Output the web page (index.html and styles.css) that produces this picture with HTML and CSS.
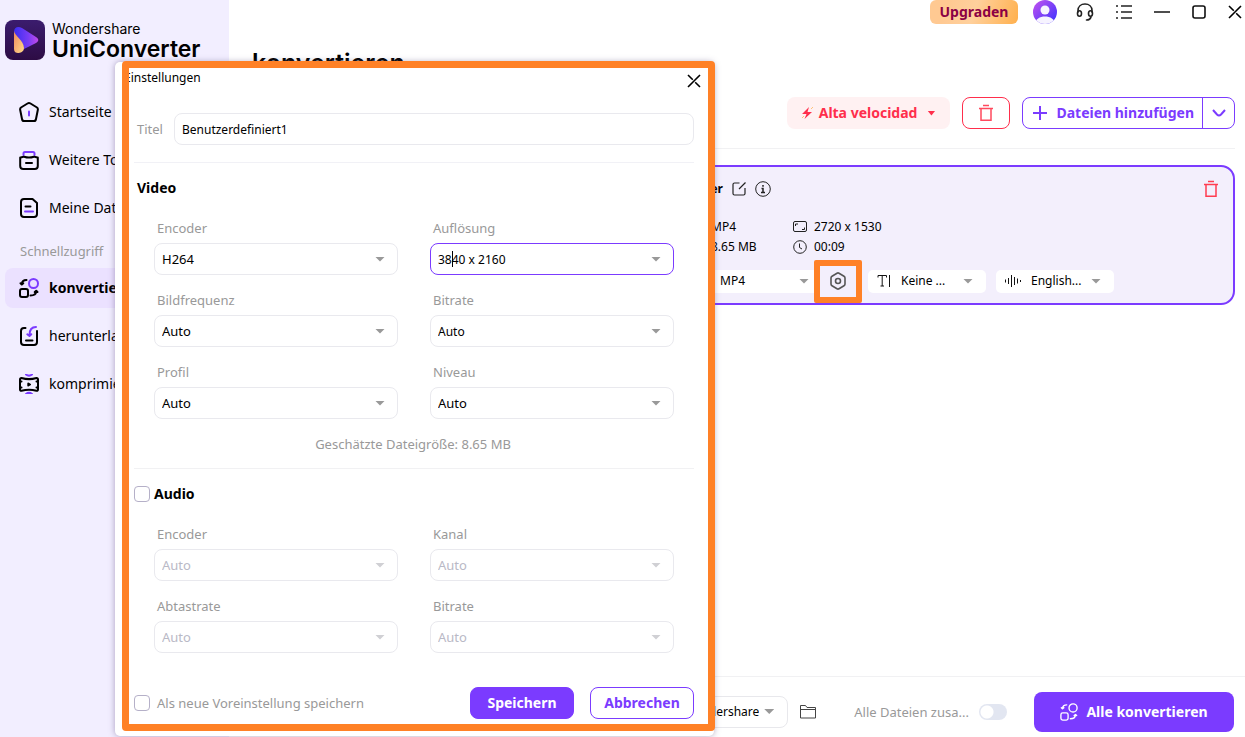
FILE: index.html
```html
<!DOCTYPE html>
<html lang="de">
<head>
<meta charset="utf-8">
<title>Wondershare UniConverter</title>
<link rel="stylesheet" href="styles.css">
</head>
<body>
<svg class="defs" aria-hidden="true">
  <symbol id="convert" viewBox="0 0 20 20" fill="none" stroke-linecap="round" stroke-linejoin="round">
    <circle class="accent" cx="14.500" cy="5.500" r="4.500"/>
    <rect x="1" y="11" width="8" height="8" rx="2"/>
    <path d="M7.500 2C4.500 2 3 3.500 2.800 6M1.500 5.200l1.300 1.300L4.300 5.200M11.500 17.500c3.500 0 5.500-1.500 5.700-4M15.700 14l1.500-1.300 1.300 1.300"/>
  </symbol>
  <symbol id="trash" viewBox="0 0 16 18" fill="none" stroke="currentColor" stroke-width="1.500">
    <path d="M5 1.500h6M1 4.500h14M3 5v11.200h10V5"/>
  </symbol>
  <symbol id="close" viewBox="0 0 14 14" fill="none" stroke="currentColor" stroke-width="1.600">
    <path d="M1 1l4.800 4.800M8.200 8.200L13 13M13 1L1 13"/>
  </symbol>
</svg>

<div class="app">
  <aside class="sidebar">
    <div class="brand">
      <svg width="40" height="40" viewBox="0 0 40 40" aria-hidden="true">
        <defs>
          <linearGradient id="lg1" x1="0" y1="0" x2="0" y2="1"><stop offset="0" stop-color="#3b1c6e"/><stop offset="1" stop-color="#2d0c44"/></linearGradient>
          <linearGradient id="lg2" x1="0" y1="0" x2="1" y2="0"><stop offset="0" stop-color="#3b2df0"/><stop offset="0.600" stop-color="#7a3cf5"/><stop offset="1" stop-color="#c04ae8"/></linearGradient>
          <linearGradient id="lg3" x1="0" y1="0" x2="1" y2="1"><stop offset="0" stop-color="#f08a5d"/><stop offset="1" stop-color="#ffd98a"/></linearGradient>
        </defs>
        <rect width="40" height="40" rx="8" fill="url(#lg1)"/>
        <path d="M9 12C9 7 13 6 17 8l14 9c3 2 3 4 0 6l-12 6C19 22 10 16 9 12z" fill="url(#lg2)"/>
        <path d="M9 11c1 5 10 10 10 17 0 4-4 5-6 5s-4-1-4-4z" fill="url(#lg3)"/>
      </svg>
      <div class="brand-text"><span class="brand-top">Wondershare</span><span class="brand-name">UniConverter</span></div>
    </div>
    <nav class="nav">
      <a class="nav-item" href="#"><svg viewBox="0 0 20 20"><path d="M8.500 1.500L2 5.500C1 6.200 1 7 1.200 8L3 17c.2 1.300 1 2 2 2h10c1 0 1.800-.7 2-2l1.800-9c.2-1 .2-1.800-.8-2.500l-6.500-4c-1-.6-2-.6-3 0z"/><path class="accent" d="M10 9.500v4"/></svg>Startseite</a>
      <a class="nav-item" href="#"><svg viewBox="0 0 20 20"><path class="accent" d="M4.500 5V3.500C4.500 2.500 5 2 6 2h8c1 0 1.500.5 1.500 1.500V5"/><path d="M1.200 7.500c1 0 2.500-1 4-.7 3 1 6.600 1 9.600 0 1.500-.3 3 .7 4 .7V16c0 2-1 3-3 3H4.200c-2 0-3-1-3-3zM7 13h6"/></svg>Weitere Tools</a>
      <a class="nav-item" href="#"><svg viewBox="0 0 20 20"><path d="M5 1h8.500L18 5v11c0 2-1 3-3 3H5c-2 0-3-1-3-3V4c0-2 1-3 3-3zM6.500 8.500h5"/><path class="accent" d="M6 13.500h8"/></svg>Meine Dateien</a>
      <p class="nav-label">Schnellzugriff</p>
      <a class="nav-item active" href="#"><svg class="duo"><use href="#convert"/></svg>konvertieren</a>
      <a class="nav-item" href="#"><svg viewBox="0 0 20 20"><path d="M6.500 2H5C3 2 2 3 2 5v11c0 2 1 3 3 3h10c2 0 3-1 3-3V5M7 14.500h6.500"/><path class="accent" d="M17 1c-4 0-6.500 2.500-6.500 8M8.300 8.300l2.200 1.700 1.800-1.700"/></svg>herunterladen</a>
      <a class="nav-item" href="#"><svg viewBox="0 0 20 20"><path d="M2.500 4C1.500 4 1 4.500 1 5.500v10C1 16.500 1.500 17 2.500 16.800c5-1.500 10-1.500 15 0 1 .2 1.500-.3 1.500-1.300v-10C19 4.500 18.500 4 17.500 4c-5 1.500-10 1.500-15 0z"/><path d="M1 7.500h1.500M1 13.500h1.500M17.500 7.500H19M17.500 13.500H19M9.300 9.500l1.700 1-1.700 1z"/><path class="accent" d="M7 .5c2 1.500 4 1.500 6 0M7 20c2-1.500 4-1.500 6 0"/></svg>komprimieren</a>
    </nav>
  </aside>

  <main class="main">
    <header class="topbar">
      <button class="upgrade">Upgraden</button>
      <button class="icon-btn" aria-label="Konto"><svg width="24" height="24" viewBox="0 0 24 24"><defs><linearGradient id="av" x1="0" y1="0" x2="1" y2="1"><stop offset="0" stop-color="#c653ee"/><stop offset="1" stop-color="#3730ff"/></linearGradient><clipPath id="ac"><circle cx="12" cy="12" r="12"/></clipPath></defs><circle cx="12" cy="12" r="12" fill="url(#av)"/><g clip-path="url(#ac)" fill="#f6f3ff"><circle cx="12" cy="10" r="4.500"/><path d="M2 24c0-10 20-10 20 0z"/></g></svg></button>
      <button class="icon-btn" aria-label="Support"><svg width="18" height="20" viewBox="0 0 18 20" fill="none" stroke="#222" stroke-width="1.600" stroke-linecap="round"><path d="M2 10V8.500C2 4.500 5 2 9 2s7 2.500 7 6.500V10M15 15c-.5 2-2.500 3-4.500 3"/><ellipse cx="3.500" cy="11.500" rx="2" ry="2.800"/><ellipse cx="14.500" cy="11.500" rx="2" ry="2.800"/></svg></button>
      <button class="icon-btn" aria-label="Menü"><svg width="16" height="16" viewBox="0 0 16 16" stroke="#222" stroke-width="1.600"><path d="M0 2h2M5 2h11M0 8h2M5 8h11M0 14h2M5 14h11"/></svg></button>
      <button class="icon-btn" aria-label="Minimieren"><svg width="16" height="16" viewBox="0 0 16 16" stroke="#222" stroke-width="1.600"><path d="M0 8h16"/></svg></button>
      <button class="icon-btn" aria-label="Maximieren"><svg width="14" height="14" viewBox="0 0 14 14" fill="none" stroke="#111" stroke-width="1.600"><rect x="1" y="1" width="12" height="12" rx="2"/></svg></button>
      <button class="icon-btn" aria-label="Schließen"><svg width="14" height="14"><use href="#close"/></svg></button>
    </header>
    <h1>konvertieren</h1>
    <div class="toolbar">
      <button class="speed"><svg width="12" height="14" viewBox="0 0 12 14"><path d="M8 1L1 8h4.500L3.500 13 11 6H6.500z" fill="#ff2e4c"/><path d="M1 12l2-2M10 3l2-2" stroke="#ffc27a"/></svg>Alta velocidad<span class="caret"></span></button>
      <button class="clear" aria-label="Alle löschen"><svg width="16" height="18"><use href="#trash"/></svg></button>
      <div class="add">
        <button class="add-main"><svg width="14" height="14" viewBox="0 0 14 14" stroke="currentColor" stroke-width="2"><path d="M7 0v14M0 7h14"/></svg>Dateien hinzufügen</button>
        <button class="add-more" aria-label="Weitere Optionen"><svg width="14" height="8" viewBox="0 0 14 8" fill="none" stroke="currentColor" stroke-width="2"><path d="M1 1l4 4.500c1.500 1.500 2.500 1.500 4 0L13 1"/></svg></button>
      </div>
    </div>
    <article class="card">
      <div class="info">
        <div class="card-title">
          <h2>UniConverter</h2>
          <svg width="14" height="14" viewBox="0 0 14 14" fill="none" stroke="#222" stroke-width="1.200"><path d="M7.500 1H2.500C1.500 1 1 1.500 1 2.500v9c0 1 .5 1.500 1.500 1.500h9c1 0 1.500-.5 1.500-1.500V6M7 7l6.500-6.500"/></svg>
          <svg width="16" height="16" viewBox="0 0 16 16" fill="none" stroke="#222"><circle cx="8" cy="8" r="7.300"/><path d="M8 4v1.800M6.500 7.500H8V11M6 11.500h4" stroke-width="1.500"/></svg>
          <button class="icon-btn remove" aria-label="Datei entfernen"><svg width="16" height="18"><use href="#trash"/></svg></button>
        </div>
        <div class="meta">
          <span>MP4</span>
          <span class="with-icon"><svg width="14" height="12" viewBox="0 0 14 12" fill="none" stroke="#222"><rect x=".5" y=".5" width="13" height="10" rx="1.500"/><path d="M2.500 5V3h2.500M9 8.500h2.500V6.500"/></svg>2720 x 1530</span>
          <span>8.65 MB</span>
          <span class="with-icon"><svg width="14" height="14" viewBox="0 0 14 14" fill="none" stroke="#222"><circle cx="7" cy="7" r="6.300"/><path d="M6.500 3.500v4L9 9"/></svg>00:09</span>
        </div>
        <div class="controls">
          <span class="pick format"><select aria-label="Format"><option>MP4</option></select></span>
          <span class="gear"><button class="icon-btn" aria-label="Einstellungen"><svg width="18" height="18" viewBox="0 0 18 18" fill="none" stroke="#555" stroke-width="1.600"><path d="M8 1.200c.7-.4 1.300-.4 2 0l5 3c.7.4 1 1 1 1.700v6.200c0 .7-.3 1.300-1 1.700l-5 3c-.7.400-1.300.4-2 0l-5-3c-.7-.4-1-1-1-1.700V5.900c0-.7.3-1.300 1-1.700z"/><circle cx="9" cy="9" r="2.500"/></svg></button></span>
          <span class="pick track"><svg width="14" height="14" viewBox="0 0 14 14" fill="none" stroke="#111"><path d="M1 3.500V1.500h8.500v2M5.200 1.500V12M3.500 12h3.500M12.500 1v12"/></svg><select aria-label="Untertitel"><option>Keine ...</option></select></span>
          <span class="pick track"><svg width="16" height="12" viewBox="0 0 16 12" stroke="#111"><path d="M.5 4.500v3M3.500 3v6M6.500 0v12M9.500 2v8M12.500 3.500v5M15.500 5v2"/></svg><select aria-label="Tonspur"><option>English...</option></select></span>
        </div>
      </div>
    </article>
    <footer class="bottom">
      <span class="pick path"><select aria-label="Speicherort"><option>Wondershare</option></select></span>
      <button class="icon-btn" aria-label="Ordner öffnen"><svg width="16" height="15" viewBox="0 0 16 15" fill="none" stroke="#444"><path d="M.5 14V1.500h5l1.500 2h8.500V14zM.5 5.500h15"/></svg></button>
      <label class="merge"><span>Alle Dateien zusa...</span><input type="checkbox" class="toggle"></label>
      <button class="convert-all"><svg width="18" height="18"><use href="#convert"/></svg>Alle konvertieren</button>
    </footer>
  </main>

  <section class="dialog" role="dialog" aria-labelledby="dlg-title">
    <header class="dialog-head"><h2 id="dlg-title">Einstellungen</h2><button class="icon-btn" aria-label="Dialog schließen"><svg width="14" height="14"><use href="#close"/></svg></button></header>
    <form class="form">
      <div class="title-row"><label for="preset">Titel</label><input id="preset" class="box small" type="text" value="Benutzerdefiniert1"></div>
      <fieldset class="group">
        <h3>Video</h3>
        <div class="fields">
          <div class="field"><label for="v1">Encoder</label><span class="pick"><select class="box" id="v1"><option>H264</option></select></span></div>
          <div class="field"><label for="v2">Auflösung</label><span class="pick"><input class="box small focused" id="v2" type="text" value="3840 x 2160"><span class="cursor"></span></span></div>
          <div class="field"><label for="v3">Bildfrequenz</label><span class="pick"><select class="box" id="v3"><option>Auto</option></select></span></div>
          <div class="field"><label for="v4">Bitrate</label><span class="pick"><input class="box small" id="v4" type="text" value="Auto"></span></div>
          <div class="field"><label for="v5">Profil</label><span class="pick"><select class="box" id="v5"><option>Auto</option></select></span></div>
          <div class="field"><label for="v6">Niveau</label><span class="pick"><select class="box" id="v6"><option>Auto</option></select></span></div>
        </div>
        <p class="estimate">Geschätzte Dateigröße: 8.65 MB</p>
      </fieldset>
      <fieldset class="group">
        <h3 class="audio-head"><label><input type="checkbox" class="check">Audio</label></h3>
        <div class="fields">
          <div class="field"><label for="a1">Encoder</label><span class="pick off"><select class="box" id="a1" disabled><option>Auto</option></select></span></div>
          <div class="field"><label for="a2">Kanal</label><span class="pick off"><select class="box" id="a2" disabled><option>Auto</option></select></span></div>
          <div class="field"><label for="a3">Abtastrate</label><span class="pick off"><select class="box" id="a3" disabled><option>Auto</option></select></span></div>
          <div class="field"><label for="a4">Bitrate</label><span class="pick off"><select class="box" id="a4" disabled><option>Auto</option></select></span></div>
        </div>
      </fieldset>
      <div class="actions">
        <label class="save-new"><input type="checkbox" class="check">Als neue Voreinstellung speichern</label>
        <button type="button" class="btn primary">Speichern</button>
        <button type="button" class="btn outline">Abbrechen</button>
      </div>
    </form>
    <div class="frame"></div>
  </section>
</div>
</body>
</html>
```

FILE: styles.css
```css
* { box-sizing: border-box; }
body {
  margin: 0;
  font: 14px/20px "Noto Sans", "Open Sans", sans-serif;
  color: #000;
  background: #fff;
}
h1, h2, h3, p, fieldset { margin: 0; padding: 0; border: 0; min-width: 0; }
button, input, select { font: inherit; color: inherit; margin: 0; }
button { border: 0; background: none; padding: 0; cursor: pointer; }
svg { display: block; flex: none; }
.defs { position: absolute; width: 0; height: 0; }

.app { position: relative; display: grid; grid-template-columns: 229px 1fr; min-height: 100vh; overflow: hidden; }

/* Sidebar */
.sidebar { background: #f2eeff; padding: 20px 5px; }
.brand { display: flex; gap: 7px; height: 40px; }
.brand-text { display: flex; flex-direction: column; font-family: Inter, sans-serif; white-space: nowrap; }
.brand-top { font-size: 14px; line-height: 18px; }
.brand-name { font-size: 23px; line-height: 22px; font-weight: 600; }
.nav { display: flex; flex-direction: column; gap: 8px; padding-top: 32px; }
.nav-item { display: flex; align-items: center; gap: 10px; height: 40px; padding: 0 14px; border-radius: 8px; color: #000; text-decoration: none; }
.nav-item svg { width: 20px; height: 20px; fill: none; stroke: #000; stroke-width: 2; stroke-linecap: round; stroke-linejoin: round; --accent: #7b3bff; }
.accent { stroke: var(--accent); }
.nav-item.active { background: #ebe1ff; font-weight: 700; }
.nav-label { padding: 7px 15px 1px; line-height: 16px; font-size: 13px; height: 24px; color: #999; }

/* Main area */
.main { display: flex; flex-direction: column; min-width: 0; }
.icon-btn { display: inline-flex; }
.topbar { display: flex; align-items: center; justify-content: flex-end; height: 24px; gap: 22px; padding-right: 3px; }
.topbar .upgrade { height: 24px; width: 88px; border-radius: 6px; background: linear-gradient(110deg, #ffc992 20%, #ffd09c 50%, #ffb04d); color: #8b0044; font-weight: 700; margin-right: -7px; }
.topbar .icon-btn:nth-child(2) { margin-right: -3px; }
h1 { font: 600 25px/32px Inter, sans-serif; padding: 23px 23px 18px; height: 73px; }
.toolbar { display: flex; justify-content: flex-end; gap: 12px; margin: 0 10px 16px 23px; padding-bottom: 19px; border-bottom: 1px solid #f1f1f3; font-weight: 700; }
.toolbar button { height: 32px; display: flex; align-items: center; }
.toolbar .speed { background: #fff1f2; border-radius: 8px; color: #ff2e4c; gap: 6px; padding: 0 15px 0 14px; }
.caret { width: 8px; height: 5px; margin-left: 4px; background: currentColor; clip-path: polygon(0 0, 100% 0, 50% 100%); }
.toolbar .clear { width: 48px; justify-content: center; border: 1px solid #ff2e4c; border-radius: 8px; color: #ff4a5e; }
.add { display: flex; height: 32px; border: 1px solid #7b3bff; border-radius: 8px; color: #7b3bff; }
.toolbar .add button { height: 30px; }
.add .add-main { gap: 9px; padding: 0 8px 0 10px; border-right: 1px solid #7b3bff; }
.add .add-more { width: 31px; justify-content: center; }

.card { margin: 0 10px 0 23px; border: 2px solid #7b3bff; border-radius: 14px; background: #f3effc; font-size: 12px; padding: 12px 14px 10px 382px; }
.card-title { display: flex; align-items: center; gap: 9px; height: 20px; }
.card-title h2 { width: 87px; text-align: right; font-size: 12px; line-height: 20px; }
.remove { margin-left: auto; color: #ff3d50; }
.meta { display: grid; grid-template-columns: 82px 1fr; padding: 18px 0 0 75px; line-height: 20px; }
.with-icon { display: flex; align-items: center; gap: 7px; }
.controls { display: flex; align-items: center; height: 24px; margin-top: 12px; }

.pick { position: relative; display: flex; align-items: center; color: #000; }
.pick::after { content: ""; position: absolute; right: 13px; width: 10px; height: 5px; background: #999; clip-path: polygon(0 0, 100% 0, 50% 100%); pointer-events: none; }
.pick select { appearance: none; border: 0; background: transparent; outline: 0; min-width: 0; flex: 1; }
.controls .pick { height: 23px; background: #fff; border-radius: 5px; }
.controls .format { width: 184px; padding-left: 84px; }
.controls .format::after { right: 11px; }
.controls .track { width: 118px; padding-left: 9px; gap: 10px; }
.controls .track select { height: 23px; }
.controls .track + .track { margin-left: 10px; }
.gear { display: flex; align-items: center; justify-content: center; width: 48px; height: 43px; margin: 0 6px 0 -6px; border: 6px solid #ff8126; border-radius: 2px; position: relative; }

.bottom { display: flex; align-items: center; justify-content: flex-end; height: 61px; margin-top: auto; padding: 9px 11px 0 23px; border-top: 1px solid #f1f1f3; }
.path { width: 180px; height: 32px; border: 1px solid #e8e8ec; border-radius: 8px; margin-right: 12px; font-size: 12px; padding: 0 28px 0 74px; }
.merge { display: flex; align-items: center; gap: 10px; color: #999; margin: 0 27px 0 38px; font-size: 13px; }
.toggle { appearance: none; width: 28px; height: 16px; border-radius: 8px; background: radial-gradient(circle at 8px 8px, #fff 6px, #e2e6f1 7px); }
.convert-all { display: flex; align-items: center; justify-content: center; gap: 8px; width: 200px; height: 40px; border-radius: 8px; background: #7b3bff; color: #fff; font-weight: 700; }
.convert-all svg { stroke: #fff; stroke-width: 1.5; --accent: #fff; }

/* Settings dialog */
.dialog { position: absolute; left: 115px; top: 62px; width: 599px; background: #fff; border-radius: 5px; box-shadow: 0 0 6px #60508080; }
.dialog-head { display: flex; justify-content: space-between; align-items: center; height: 32px; padding: 0 13px 0 9px; }
.dialog-head h2 { font-size: 12px; font-weight: 400; }
.dialog-head .icon-btn { padding-top: 5px; }
.form { padding: 19px 20px 17px 19px; font-size: 13px; }
.title-row { display: flex; align-items: center; padding-bottom: 17px; border-bottom: 1px solid #f1f1f6; }
.title-row label { width: 40px; padding-left: 3px; color: #999; }
.box, .pick .box { appearance: none; width: 100%; height: 32px; border: 1px solid #e9e9ee; border-radius: 8px; background: #fff; padding: 0 7px; outline: 0; }
.title-row .box { flex: 1; min-width: 0; }
.box.small { font-size: 12px; }
.pick .box.focused { border-color: #7b3bff; }
.cursor { position: absolute; left: 22px; width: 1px; height: 16px; background: #000; }
.group + .group { border-top: 1px solid #f1f1f3; }
.group h3 { font-size: 14px; line-height: 20px; padding: 15px 3px 0; }
.fields { display: grid; grid-template-columns: 1fr 1fr; gap: 15px 32px; padding: 20px 20px 0; }
.field > label { display: block; height: 25px; padding-left: 3px; line-height: 20px; color: #999; }
.off { color: #b9b9c6; }
.off::after { background: #d0d0d4; }
.off .box:disabled { color: #b9b9c6; opacity: 1; }
.estimate { text-align: center; color: #999; padding: 15px 2px 14px 0; }
.group h3.audio-head { padding-left: 0; }
.audio-head label, .save-new { display: flex; align-items: center; gap: 4px; }
.check { appearance: none; width: 16px; height: 16px; border: 1px solid #b5b0c8; border-radius: 4px; background: #fff; }
.actions { display: flex; align-items: center; gap: 16px; padding-top: 34px; }
.save-new { margin-right: auto; gap: 7px; color: #999; }
.btn { width: 104px; height: 32px; border-radius: 8px; font-size: 14px; font-weight: 700; border: 1px solid #7b3bff; }
.primary { background: #7b3bff; color: #fff; }
.outline { color: #7b3bff; background: #fff; }
.frame { position: absolute; left: 7px; right: -1px; top: -1px; bottom: 5px; border: 7px solid #ff8126; border-radius: 4px; pointer-events: none; }
```
